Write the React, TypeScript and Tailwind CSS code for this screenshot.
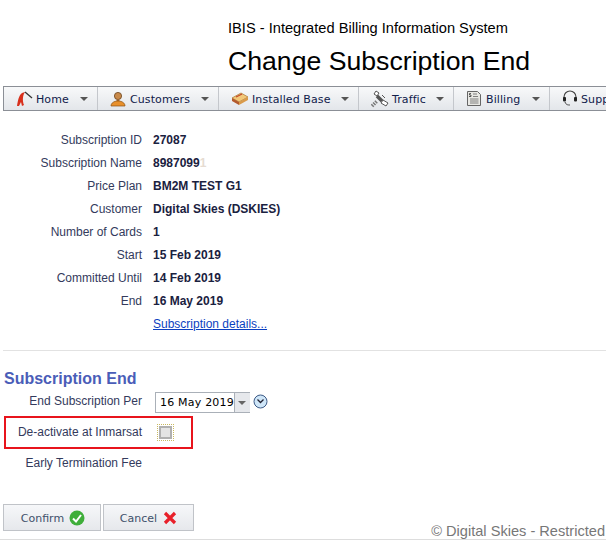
const rows = [
  ["Subscription ID", "27087"],
  ["Subscription Name", "8987099"],
  ["Price Plan", "BM2M TEST G1"],
  ["Customer", "Digital Skies (DSKIES)"],
  ["Number of Cards", "1"],
  ["Start", "15 Feb 2019"],
  ["Committed Until", "14 Feb 2019"],
  ["End", "16 May 2019"],
]

function HomeIcon() {
  return (
    <svg viewBox="0 0 17 18" className="h-[18px] w-[17px] shrink-0">
      <path d="M1 16C2 10 3 5 6 3l3-1c-2 3-3 8-1 13l-2 1-1-4-2 4z" fill="#d8301c" />
      <path d="M9 2l7 6" stroke="#333" strokeWidth="1.300" fill="none" />
    </svg>
  )
}

function CustomerIcon() {
  return (
    <svg viewBox="0 0 16 16" className="mr-px h-4 w-4 shrink-0">
      <circle cx="8" cy="5" r="3.600" fill="#c98a4a" stroke="#6a421c" strokeWidth="0.800" />
      <path d="M6.500 8.500h3V10h-3z" fill="#a8682c" />
      <path d="M1 15c0-3 3-5 7-5s7 2 7 5z" fill="#e8902c" stroke="#8a5114" strokeWidth="0.700" />
    </svg>
  )
}

function InstalledIcon() {
  return (
    <svg viewBox="0 0 18 16" className="h-4 w-[18px] shrink-0">
      <path d="M1 7l9-5 7 4-9 5z" fill="#f2c879" stroke="#a8742c" strokeWidth="0.700" />
      <path d="M1 7l7 4v3l-7-4z" fill="#b35a2c" />
      <path d="M8 11l9-5v3l-9 5z" fill="#d99a4a" />
      <path d="M5 6l6-3" stroke="#c2452c" strokeWidth="1.200" />
    </svg>
  )
}

function TrafficIcon() {
  return (
    <svg viewBox="0 0 18 18" className="h-[18px] w-[18px] shrink-0" fill="none" stroke="#444">
      <path d="M1 16l5-5" strokeWidth="3.500" stroke="#777" strokeDasharray="1.500 1" />
      <path d="M6 6l5 5" strokeWidth="3.500" stroke="#555" />
      <path d="M5 1l3 2-2 3-3-2zM12 10l5 3-2 3-5-3z" fill="#fff" strokeWidth="0.900" />
      <path d="M11 5l3 3" strokeWidth="0.900" />
    </svg>
  )
}

function BillingIcon() {
  return (
    <svg viewBox="0 0 16 17" className="mr-px h-[17px] w-4 shrink-0" fill="none" stroke="#666">
      <path d="M1.500 1.500h10l3 3v11h-13z" fill="#e8e8e4" />
      <path d="M7 4h4M7 6.500h5M4 9h8.500M4 11h8.500M4 13h8.500" strokeWidth="0.800" />
      <path d="M5 3.500H3.500v1.500H5v1.500H3" strokeWidth="0.800" stroke="#333" />
    </svg>
  )
}

function SupportIcon() {
  return (
    <svg viewBox="0 0 16 17" className="h-[17px] w-4 shrink-0" fill="none">
      <path d="M2 9V7a6 6 0 0 1 12 0v2" stroke="#444" strokeWidth="1.100" />
      <rect x="1" y="7" width="3" height="4.500" rx="1" fill="#222" />
      <rect x="12" y="7" width="3" height="4.500" rx="1" fill="#222" />
      <path d="M3 12c1 3 3 3 5 3" stroke="#444" />
    </svg>
  )
}

function MenuItem({ label, icon, width }: { label: string; icon: React.ReactNode; width: string }) {
  return (
    <div className={`flex h-full shrink-0 items-center border-r border-[#c4c7cc] pl-3 ${width}`}>
      {icon}
      <span className="ml-[3px] pt-[3px] whitespace-nowrap text-[11px] tracking-[0.1px] text-[#10204a]">{label}</span>
      <span className="ml-auto mr-[9px] h-0 w-0 border-x-[4px] border-t-[4px] border-x-transparent border-t-[#555]" />
    </div>
  )
}

export default function App() {
  return (
    <div className="relative h-[540px] w-[606px] overflow-hidden bg-white font-['Liberation_Sans',Arial,sans-serif] text-[12px] text-[#333a5c]">
      <header className="h-[86px] pl-[228px] pt-[19px] text-black">
        <div className="text-[14.65px] leading-[18px]">IBIS - Integrated Billing Information System</div>
        <h1 className="mt-[6px] whitespace-nowrap text-[26.65px] leading-[36px]">Change Subscription End</h1>
      </header>

      <nav className="ml-[3px] flex h-[25px] items-center overflow-hidden border-y border-l border-[#8b8f96] bg-gradient-to-b from-[#f8f9fa] to-[#e3e6ea] font-['DejaVu_Sans',Verdana,sans-serif]">
        <MenuItem label="Home" icon={<HomeIcon />} width="w-[94px]" />
        <MenuItem label="Customers" icon={<CustomerIcon />} width="w-[121px]" />
        <MenuItem label="Installed Base" icon={<InstalledIcon />} width="w-[140px]" />
        <MenuItem label="Traffic" icon={<TrafficIcon />} width="w-[95px]" />
        <MenuItem label="Billing" icon={<BillingIcon />} width="w-[96px]" />
        <MenuItem label="Support" icon={<SupportIcon />} width="w-[110px]" />
      </nav>

      <dl className="mt-[18px] grid grid-cols-[142px_1fr] gap-x-[11px] leading-[23px]">
        {rows.map(([label, value]) => (
          <div key={label} className="col-span-2 grid grid-cols-subgrid">
            <dt className="text-right">{label}</dt>
            <dd className="font-bold text-[#1a2140]">
              {value}
              {label === "Subscription Name" && <span className="text-[#e6dcd2]">1</span>}
            </dd>
          </div>
        ))}
        <a className="col-start-2 text-[#0b3fc0] underline">Subscription details...</a>
      </dl>

      <hr className="ml-[3px] mt-[14px] border-[#e2e2e2]" />

      <section className="mt-[18px]">
        <h2 className="pl-1 text-[16px] font-bold leading-[20px] text-[#4a5db8]">Subscription End</h2>
        <div className="mt-[3px] flex h-[21px] items-start">
          <span className="mt-px w-[142px] whitespace-nowrap text-right leading-[16px]">End Subscription Per</span>
          <div className="ml-[13px] flex h-[21px] w-[95px] items-center border border-[#aab0b8] font-['DejaVu_Sans',Verdana,sans-serif] text-[11px] text-black">
            <span className="flex-1 whitespace-nowrap pl-1 pt-[2px] tracking-[0.2px]">16 May 2019</span>
            <span className="flex h-full w-4 shrink-0 items-center justify-center border-l border-[#aab0b8] bg-[#e6e8ec]">
              <span className="h-0 w-0 border-x-[4px] border-t-[4px] border-x-transparent border-t-[#666]" />
            </span>
          </div>
          <svg viewBox="0 0 15 15" className="ml-[3px] mt-[2px] h-[15px] w-[15px]">
            <circle cx="7.500" cy="7.500" r="6.500" fill="#cfe6f8" stroke="#3c5a86" />
            <path d="M4.500 5.500l3 3 3-3" fill="none" stroke="#223" strokeWidth="1.300" />
          </svg>
        </div>

        <div className="ml-[4px] mt-[3px] flex h-[33px] w-[189px] items-center border-2 border-[#e8141c]">
          <span className="w-[136px] whitespace-nowrap pb-[2px] text-right">De-activate at Inmarsat</span>
          <span className="ml-[15px] flex h-[17px] w-[17px] items-center justify-center border border-dotted border-[#c8b860]">
            <span className="h-[13px] w-[13px] border-2 border-[#b0b0b0] bg-[#e4e4e4]" />
          </span>
        </div>

        <div className="mt-[6px] w-[142px] whitespace-nowrap text-right leading-[16px]">Early Termination Fee</div>
      </section>

      <div className="ml-[3px] mt-[33px] flex gap-[2px] font-['DejaVu_Sans',Verdana,sans-serif]">
        <button className="flex h-[27px] w-[98px] items-center justify-center gap-[5px] border border-[#c0c3c8] bg-gradient-to-b from-[#f6f7f9] to-[#e6e8ec] pl-[2px]">
          <span className="pt-[3px] text-[11px] text-[#40506a]">Confirm</span>
          <svg viewBox="0 0 16 16" className="h-4 w-4">
            <circle cx="8" cy="8" r="7.500" fill="#3fae3a" />
            <path d="M4 8.500l3 3 5-6.500" fill="none" stroke="#fff" strokeWidth="2" />
          </svg>
        </button>
        <button className="flex h-[27px] w-[91px] items-center justify-center gap-[6px] border border-[#c0c3c8] bg-gradient-to-b from-[#f6f7f9] to-[#e6e8ec]">
          <span className="pt-[3px] text-[11px] text-[#40506a]">Cancel</span>
          <svg viewBox="0 0 14 14" className="h-[14px] w-[14px]">
            <path d="M2 2l10 10M12 2L2 12" stroke="#e8202a" strokeWidth="3.200" />
          </svg>
        </button>
      </div>

      {/* footer note sits over the page edge */}
      <div className="absolute bottom-0 right-[1px] whitespace-nowrap text-[14.6px] leading-[18px] text-[#777]">© Digital Skies - Restricted</div>
      <div className="absolute inset-x-0 bottom-0 h-px bg-[#ddd]" />
    </div>
  )
}
